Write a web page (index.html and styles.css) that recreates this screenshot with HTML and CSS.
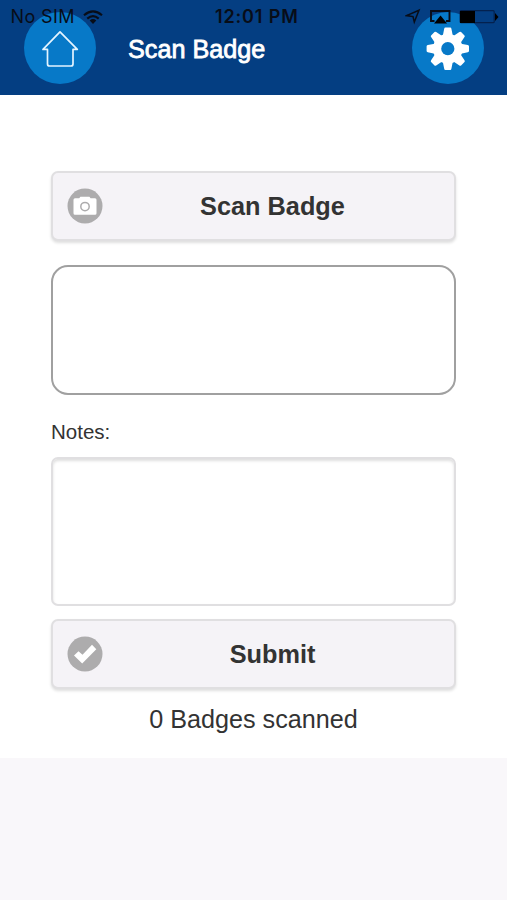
FILE: index.html
```html
<!DOCTYPE html>
<html lang="en">
<head>
<meta charset="utf-8">
<title>Scan Badge</title>
<link rel="stylesheet" href="styles.css">
</head>
<body>
<div class="status">
  <span class="carrier">No SIM</span>
  <svg class="wifi" width="20" height="15" viewBox="0 0 20 15" fill="none" stroke="#080d18" stroke-width="2.1"><path d="M1 5.300Q10-2.500 19 5.300"/><path d="M4.300 8.600Q10 3.600 15.700 8.600"/><path d="M10 14 6.700 10.400Q10 7.800 13.300 10.400Z" fill="#080d18" stroke="none"/></svg>
  <span class="time">12:01 PM</span>
  <svg class="indicators" width="94" height="18" viewBox="0 0 94 18"><path d="M1.500 7.600 14 2.200 9.300 14 8 8.600Z" fill="none" stroke="#080d18" stroke-width="1.500"/><path d="M29.500 13H26V3h18.500V13h-3.500" fill="none" stroke="#080d18" stroke-width="1.900"/><path d="M35.500 7.500 42 15.500H29Z" fill="#000"/><rect x="55.200" y="2.700" width="34" height="12" rx="1" fill="none" stroke="#04214e" stroke-width="1.200"/><path d="M55 3h15v12H55zM90 5l3.500 4-3.500 4z" fill="#000"/></svg>
</div>
<header class="header">
  <a class="round" aria-label="Home"><svg width="72" height="72" viewBox="0 0 72 72"><path d="M36 19.800 53.300 37.400H49V52Q49 54 47 54H25.500Q23.500 54 23.500 52V37.400H19Z" fill="none" stroke="#e3f4ff" stroke-width="1.700" stroke-linejoin="round"/></svg></a>
  <h1 class="title">Scan Badge</h1>
  <a class="round" aria-label="Settings"><svg width="72" height="72" viewBox="-36 -36 72 72"><defs><path id="tooth" d="M-5-13-3.600-20Q-3.400-21.200-2.400-21.200H2.400Q3.400-21.200 3.600-20L5-13Z"/></defs><g fill="#fff" transform="translate(-.2 .7)"><use href="#tooth"/><use href="#tooth" transform="rotate(45)"/><use href="#tooth" transform="rotate(90)"/><use href="#tooth" transform="rotate(135)"/><use href="#tooth" transform="rotate(180)"/><use href="#tooth" transform="rotate(225)"/><use href="#tooth" transform="rotate(270)"/><use href="#tooth" transform="rotate(315)"/><circle r="14.800"/></g><circle cx="-.2" cy=".7" r="6.600" fill="#0779c8"/></svg></a>
</header>
<main class="content">
  <button class="button">
    <svg class="icon" width="36" height="36" viewBox="0 0 36 36"><circle cx="18" cy="18" r="17.500" fill="#adacad"/><path d="M8 10.300h4.200l1.200-1.500h9l1.200 1.500H28q1.500 0 1.500 1.500v13.400q0 1.500-1.500 1.500H8q-1.500 0-1.500-1.500V11.800q0-1.500 1.500-1.500Z" fill="#fff"/><circle cx="18" cy="18.600" r="4.200" fill="none" stroke="#adacad" stroke-width="1.500"/></svg>
    <span>Scan Badge</span>
  </button>
  <div class="result"></div>
  <label class="label" for="notes">Notes:</label>
  <textarea class="notes" id="notes"></textarea>
  <button class="button">
    <svg class="icon" width="36" height="36" viewBox="0 0 36 36"><circle cx="18" cy="18" r="17.500" fill="#adacad"/><path d="m7 19.500 4.500-4.300 4 3.600 9.500-10 4.300 4.400L15.200 27.500Z" fill="#fff"/></svg>
    <span>Submit</span>
  </button>
  <p class="count">0 Badges scanned</p>
</main>
</body>
</html>
```
FILE: styles.css
```css
* { box-sizing: border-box; }

body {
  margin: 0;
  background: #f9f7fa;
  color: #333;
  font-family: "Liberation Sans", Arial, sans-serif;
}

.status {
  position: absolute;
  top: 7px;
  left: 0;
  width: 507px;
  height: 20px;
  padding: 0 8.500px 0 10.500px;
  display: flex;
  align-items: center;
  color: #080d18;
  font: 17px/20px Inter, sans-serif;
  white-space: nowrap;
}

.carrier { width: 63.500px; font-size: 18px; letter-spacing: .4px; }
.wifi { margin-left: 9px; }
.time { margin-left: 112px; width: 86px; font-size: 18px; font-weight: 600; letter-spacing: .850px; }
.indicators { margin-left: auto; }

.header {
  height: 95px;
  padding: 12px 23.500px 0 24px;
  display: flex;
  align-items: flex-start;
  background: #043e82;
}

.round {
  width: 72px;
  height: 72px;
  flex: none;
  border-radius: 50%;
  background: #0779c8;
}

.round svg { display: block; }

.title {
  flex: 1;
  margin: 22px 0 0 32px;
  color: #fff;
  font-size: 25.200px;
  font-weight: 400;
  line-height: 30px;
  -webkit-text-stroke: .8px #fff;
}

.content {
  height: 663px;
  padding: 76px 51px 0;
  display: flex;
  flex-direction: column;
  background: #fff;
}

.button {
  height: 70px;
  flex: none;
  padding: 0 28px 0 14px;
  display: flex;
  align-items: center;
  border: 2px solid #e0dfe1;
  border-radius: 7px;
  background: #f5f3f7;
  box-shadow: 0 2px 3px rgba(0, 0, 0, .13);
  color: #333;
  font: bold 25.300px/30px "Liberation Sans", Arial, sans-serif;
}

.button span { flex: 1; margin-left: 16px; text-align: center; }

.icon { flex: none; }

.result {
  height: 130px;
  margin-top: 24px;
  flex: none;
  border: 2px solid #a0a0a0;
  border-radius: 17px;
}

.label {
  margin: 25px 0 13px;
  font-size: 20.500px;
  line-height: 24px;
}

.notes {
  width: 100%;
  height: 149px;
  flex: none;
  margin: 0 0 13px;
  border: 2px solid #e0dfe1;
  border-radius: 7px;
  background: #fff;
  box-shadow: inset 0 2px 3px rgba(0, 0, 0, .13);
  resize: none;
  outline: none;
}

.count {
  margin: 15px 0 0;
  font-size: 25.200px;
  line-height: 30px;
  text-align: center;
}
```
